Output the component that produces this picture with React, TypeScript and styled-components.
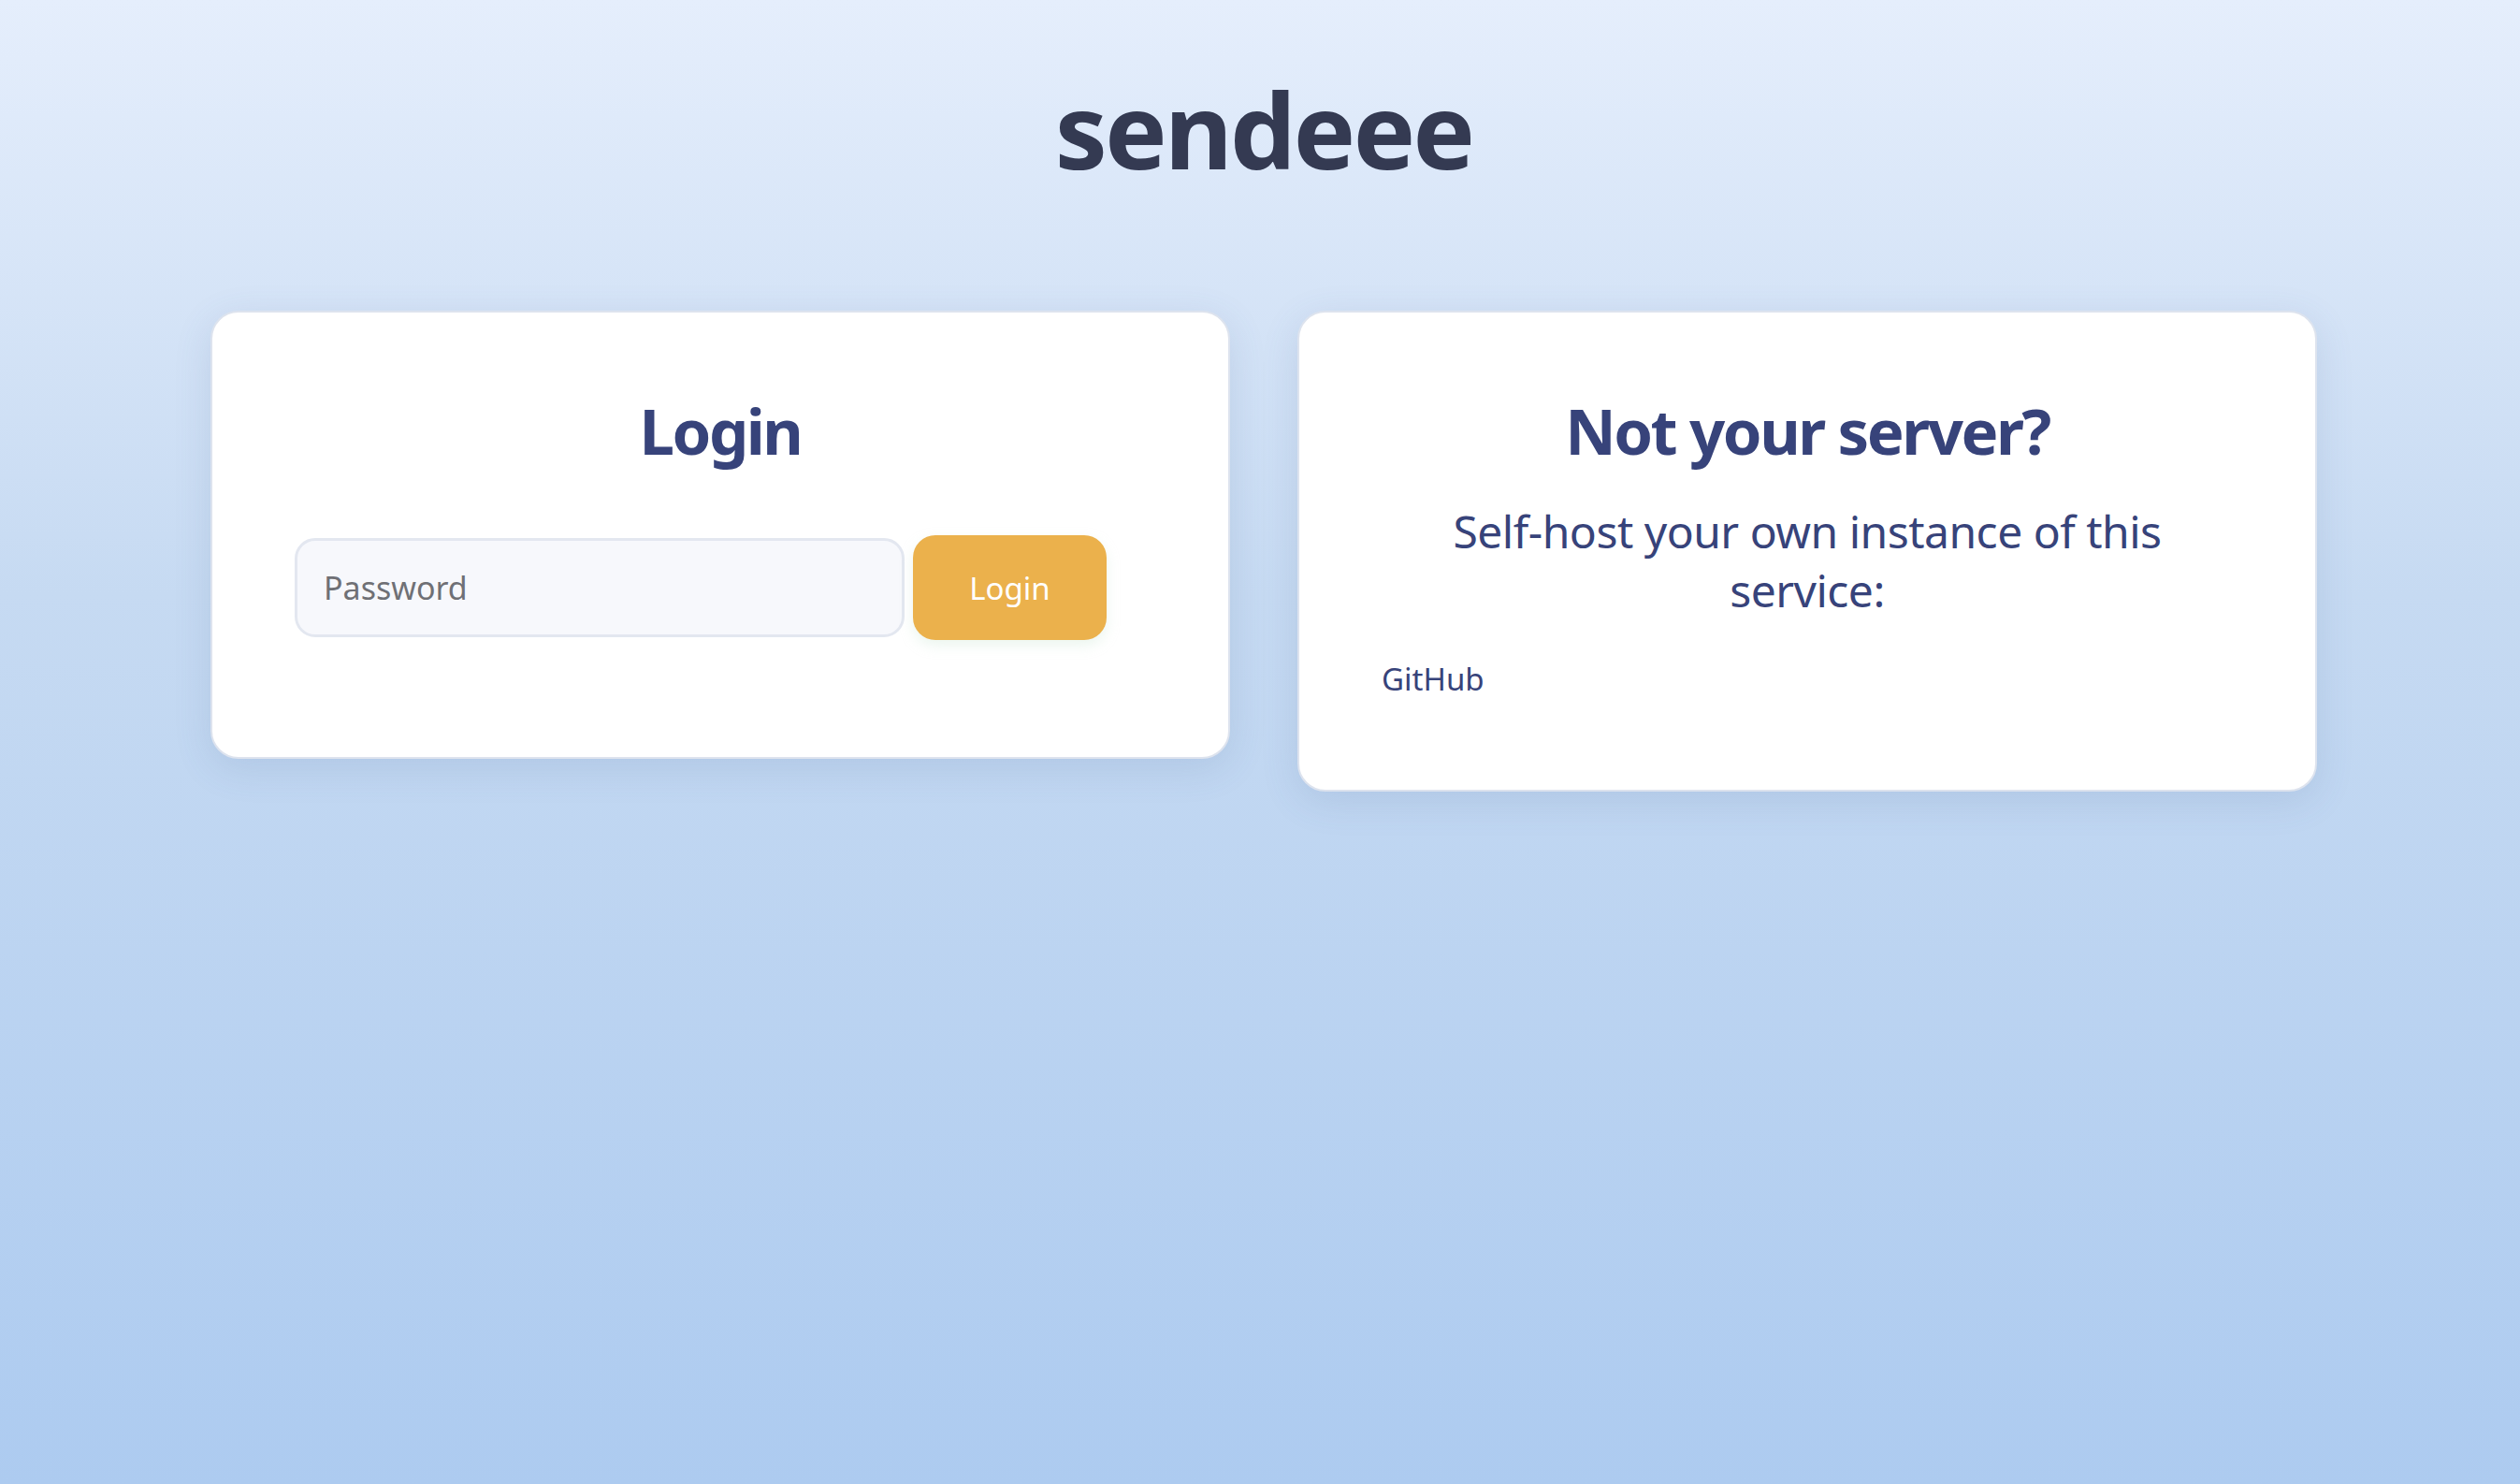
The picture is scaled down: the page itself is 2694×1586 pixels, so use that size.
import React from "react";
import styled, { createGlobalStyle } from "styled-components";

const GlobalStyle = createGlobalStyle`
  html, body {
    margin: 0;
    padding: 0;
  }
  body {
    font-family: "Noto Sans", "Open Sans", sans-serif;
    background: linear-gradient(180deg, #e5eefc 0%, #c6daf2 40%, #adcbf0 100%);
    min-height: 100vh;
  }
`;

const Page = styled.main`
  min-height: 100vh;
  box-sizing: border-box;
  padding: 71px 0 0 8px;
`;

const Brand = styled.h1`
  margin: 0;
  text-align: center;
  font-size: 112px;
  font-weight: 700;
  line-height: 1.2;
  letter-spacing: -3px;
  color: #343a52;
`;

const Columns = styled.div`
  width: 2252px;
  margin: 127px auto 0;
  display: grid;
  grid-template-columns: 1fr 1fr;
  gap: 72px;
  align-items: start;
`;

const Card = styled.section`
  background: #ffffff;
  border: 2px solid #dde3ee;
  border-radius: 30px;
  box-shadow: 0 10px 40px rgba(70, 100, 150, 0.14);
  padding: 86px 88px 99px;
  text-align: center;
  color: #37437a;
`;

const CardTitle = styled.h2`
  margin: 0;
  font-size: 67px;
  font-weight: 700;
  line-height: 1.22;
  letter-spacing: -2.5px;
  color: #37437a;
`;

const Form = styled.form`
  display: flex;
  align-items: center;
  gap: 9px;
  margin: 70px 0 26px;
`;

const PasswordInput = styled.input`
  box-sizing: border-box;
  width: 652px;
  height: 106px;
  padding: 0 28px;
  border: 3px solid #e3e7f0;
  border-radius: 22px;
  background: #f7f8fc;
  font-family: inherit;
  font-size: 34px;
  color: #333;
  outline: none;
  &::placeholder {
    color: #6f7075;
  }
`;

const SubmitButton = styled.button`
  box-sizing: border-box;
  height: 112px;
  width: 207px;
  border: none;
  border-radius: 24px;
  background: #ebb14c;
  color: #ffffff;
  font-family: inherit;
  font-size: 33px;
  box-shadow: 0 6px 14px rgba(200, 230, 210, 0.35);
  cursor: pointer;
`;

const Lead = styled.p`
  margin: 34px 0 0;
  font-size: 48px;
  line-height: 1.32;
  letter-spacing: -0.5px;
  color: #37437a;
`;

const LinkList = styled.div`
  margin-top: 43px;
  text-align: left;
`;

const RepoLink = styled.a`
  font-size: 33px;
  line-height: 1.2;
  color: #37437a;
  text-decoration: none;
`;

export default function App() {
  return (
    <>
      <GlobalStyle />
      <Page>
        <Brand>sendeee</Brand>
        <Columns>
          <Card>
            <CardTitle>Login</CardTitle>
            <Form onSubmit={(e) => e.preventDefault()}>
              <PasswordInput type="password" placeholder="Password" />
              <SubmitButton type="submit">Login</SubmitButton>
            </Form>
          </Card>
          <Card>
            <CardTitle>Not your server?</CardTitle>
            <Lead>Self-host your own instance of this service:</Lead>
            <LinkList>
              <RepoLink href="#">GitHub</RepoLink>
            </LinkList>
          </Card>
        </Columns>
      </Page>
    </>
  );
}
